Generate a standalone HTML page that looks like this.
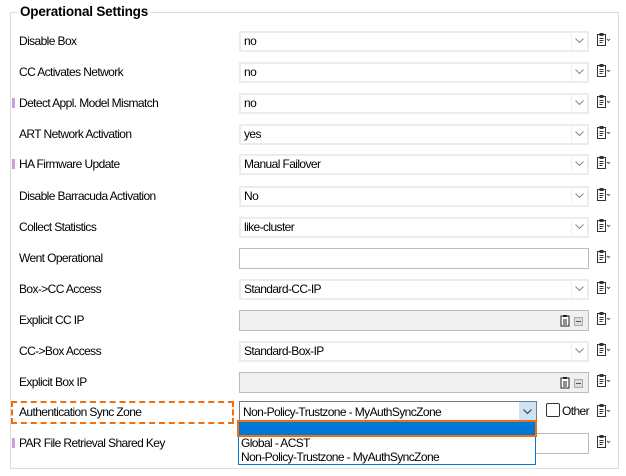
<!DOCTYPE html>
<html><head><style>
body{margin:0;width:626px;height:476px;background:#fff;font-family:"Liberation Sans",sans-serif;font-size:12px;letter-spacing:-0.6px;color:#000;position:relative;overflow:hidden}
.a{position:absolute}
.fs{left:10px;top:12px;width:607px;height:455px;border:1px solid #dcdcdc}
.lg{left:17px;top:4px;background:#fff;padding:0 3px;font-weight:bold;font-size:13.5px;letter-spacing:-0.2px}
.lb{left:19px}
.sel{left:239px;width:346px;height:17px;border:2px solid #ececec;background:#fff}
.sel span{position:absolute;left:3px;top:1px}
.arr{position:absolute;right:0;top:0;width:15px;height:17px;border-left:1px solid #f0f0f0}
.inp{left:239px;width:348px;height:19px;border:1px solid #bcbcbc;background:#fff}
.inp.g{background:#f0f0f0}
.mk{position:absolute;left:12px;width:3px;height:10px;background:linear-gradient(90deg,#b0a0e8,#e0a0d0)}
</style></head><body>
<div class="a fs"></div>
<div class="a lg">Operational Settings</div>
<div id="c"></div>
<script>
const rows=[["Disable Box","no"],["CC Activates Network","no"],["Detect Appl. Model Mismatch","no",1],["ART Network Activation","yes"],["HA Firmware Update","Manual Failover",1],["Disable Barracuda Activation","No"],["Collect Statistics","like-cluster"],["Went Operational",null,0,"w"],["Box->CC Access","Standard-CC-IP"],["Explicit CC IP",null,0,"g"],["CC->Box Access","Standard-Box-IP"],["Explicit Box IP",null,0,"g"],["Authentication Sync Zone",null,0,"auth"],["PAR File Retrieval Shared Key",null,1,"w"]];
const ys=[41,72,103,134,164,196,227,258,289,320,351,382,412,443];
const clip='<svg class="a" style="left:596px;top:TOPpx" width="16" height="16" viewBox="0 0 16 16"><rect x="1.5" y="2.5" width="8" height="11" fill="none" stroke="#333"/><rect x="3.5" y="1" width="4" height="3" fill="#333"/><path d="M3.5 6.5h4M3.5 8.5h4M3.5 10.5h3" stroke="#333"/><path d="M11 7l1.5 1.5L14 7" fill="none" stroke="#555"/></svg>';
const chev='<svg style="position:absolute;right:3px;top:5px" width="9" height="6"><path d="M0.5 0.5l4 4 4-4" fill="none" stroke="#888"/></svg>';
let h='';
rows.forEach((r,i)=>{const y=ys[i];
h+=`<div class="a lb" style="top:${y-7}px">${r[0].replace('>','&gt;')}</div>`;
if(r[2])h+=`<div class="mk" style="top:${y-5}px"></div>`;
if(r[1]!=null)h+=`<div class="a sel" style="top:${y-10}px"><span>${r[1]}</span><div class="arr">${chev}</div></div>`;
else if(r[3]=='w')h+=`<div class="a inp" style="top:${y-10}px"></div>`;
else if(r[3]=='g')h+=`<div class="a inp g" style="top:${y-10}px"><svg style="position:absolute;left:320px;top:4px" width="24" height="12"><rect x="1" y="1" width="8" height="10" fill="#fff" stroke="#222"/><rect x="3" y="0" width="4" height="2" fill="#222"/><path d="M3 5h4M3 7h4M3 9h4" stroke="#222"/><rect x="14.5" y="2.5" width="8" height="8" fill="#ddd" stroke="#aaa"/><path d="M16 6.5h5" stroke="#555"/></svg></div>`;
h+=clip.replace('TOP',y-9);
});
document.getElementById('c').innerHTML=h;
</script>
<div class="a" style="left:11px;top:401px;width:219px;height:19px;border:2px dashed #f07010"></div>
<div class="a" style="left:239px;top:401px;width:296px;height:19px;border:1px solid #7a7a7a;background:#fff"><span style="position:absolute;left:3px;top:3px">Non-Policy-Trustzone - MyAuthSyncZone</span><div style="position:absolute;right:0;top:0;width:17px;height:19px;background:#cce4f7"><svg style="position:absolute;left:4px;top:7px" width="9" height="6"><path d="M0.5 0.5l4 4 4-4" fill="none" stroke="#333"/></svg></div></div>
<div class="a" style="left:546px;top:403px;width:12px;height:12px;border:1px solid #333;border-radius:2px;background:#fff"></div>
<div class="a" style="left:562px;top:404px">Other</div>
<div class="a" style="left:238px;top:420px;width:296px;height:43px;border:1px solid #0078d7;background:#fff"></div>
<div class="a" style="left:237px;top:420px;width:296px;height:13px;border:2px solid #f07010;background:#0078d7"></div>
<div class="a" style="left:241px;top:436px">Global - ACST</div>
<div class="a" style="left:241px;top:450px">Non-Policy-Trustzone - MyAuthSyncZone</div>
</body></html>
